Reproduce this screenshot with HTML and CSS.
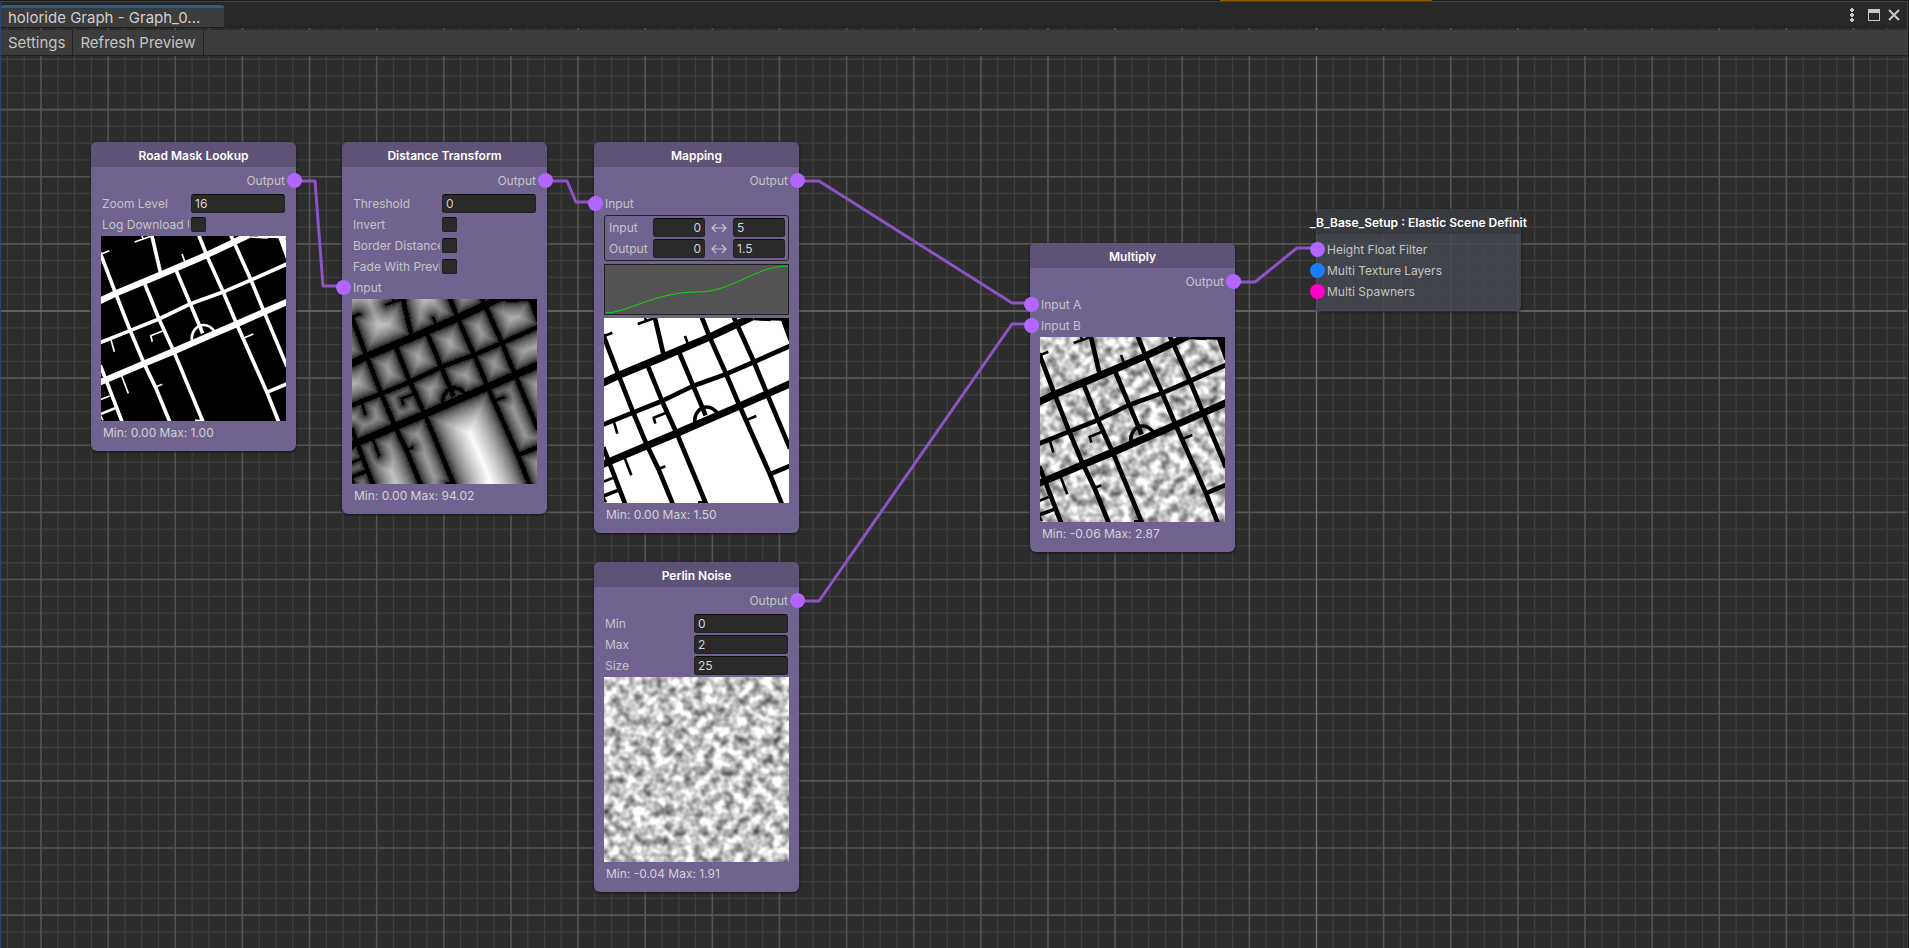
FILE: index.html
```html
<!DOCTYPE html>
<html lang="en">
<head>
<meta charset="utf-8">
<title>holoride Graph</title>
<link rel="stylesheet" href="styles.css">
<script src="graph.js" defer></script>
</head>
<body>
<svg class="defs" aria-hidden="true">
  <defs>
    <filter id="noise" x="0" y="0" width="100%" height="100%" color-interpolation-filters="sRGB">
      <feTurbulence type="fractalNoise" baseFrequency="0.1" numOctaves="2" seed="7"/>
      <feColorMatrix values="1.25 0 0 0 0.15  1.25 0 0 0 0.15  1.25 0 0 0 0.15  0 0 0 0 1"/>
      <feGaussianBlur stdDeviation="0.5"/>
    </filter>
    <symbol id="roads" viewBox="0 0 555 555">
      <g id="road-lines" fill="none" stroke="currentColor" stroke-linejoin="round">
        <path class="avenue" d="M-8 197L44 172L177 117L317 57L402 17L446 -4"/>
        <path class="street" d="M-6 321L87 284L174 249L267 204L364 169L450 132L562 82"/>
        <path class="avenue" d="M-8 441L129 383L220 345L307 307L407 264L489 228L562 196"/>
        <path class="street" d="M-3 49L44 172L87 282L129 382L165 457L208 562"/>
        <path class="street" d="M132 145L174 249L220 350L308 562"/>
        <path class="street" d="M225 102L267 202L305 292"/>
        <path class="street" d="M291 -8L319 62L367 169L407 264L497 467L535 562"/>
        <path class="street" d="M387 -8L450 132L489 227L558 392"/>
        <path class="street" d="M151 -8L179 112"/>
        <path class="street" d="M-2 388L19 442L65 562"/>
        <path class="street" d="M497 469L562 442"/>
        <path class="lane" d="M-4 56L25 44M101 18L152 0M123 0L127 10M243 54L252 78M185 285L149 299L154 317M30 312L40 347M62 420L82 472M163 453L184 445M430 305L457 294M-4 492L26 480M-2 538L6 553"/>
        <path class="ring" d="M-4 535L42 517"/>
        <path class="ring" d="M273 318C268 285 290 267 308 267C322 267 333 275 342 288"/>
        <path class="lane" d="M282 553L300 553M450 3L500 6M500 2L560 6"/>
        <path class="street" d="M470 0L560 0"/>
        <path class="avenue" d="M540 0L564 66"/>
      </g>
    </symbol>
    <symbol id="swap" viewBox="0 0 16 12">
      <path fill="none" stroke="currentColor" stroke-width="1.2" d="M1 6H15M5 2L1 6L5 10M11 2L15 6L11 10"/>
    </symbol>
  </defs>
</svg>

<div class="window">
  <header class="tabbar">
    <button class="tab" type="button">holoride Graph - Graph_0...</button>
    <div class="window-actions">
      <button class="icon-button menu" type="button" aria-label="Menu"><svg width="4" height="14" viewBox="0 0 4 14"><path fill="currentColor" d="M0 1h4v2H0zM1 0h2v4H1zM0 6h4v2H0zM1 5h2v4H1zM0 11h4v2H0zM1 10h2v4H1z"/></svg></button>
      <button class="icon-button" type="button" aria-label="Maximize"><svg width="12" height="12" viewBox="0 0 12 12"><path fill="currentColor" fill-rule="evenodd" d="M0 0h12v12H0zM1 4v7h10V4z"/></svg></button>
      <button class="icon-button" type="button" aria-label="Close"><svg width="12" height="12" viewBox="0 0 12 12"><path fill="none" stroke="currentColor" stroke-width="2" d="M1 1L11 11M11 1L1 11"/></svg></button>
    </div>
  </header>
  <nav class="toolbar">
    <button class="tool" type="button">Settings</button>
    <button class="tool" type="button">Refresh Preview</button>
  </nav>

  <main class="canvas">
    <svg class="layer" id="grid" aria-hidden="true"></svg>
    <svg class="layer edges" aria-hidden="true">
      <path d="M293 153H314L322 258H343"/>
      <path d="M545 153H566L575 174H594"/>
      <path d="M797 153H818L1011 275H1031"/>
      <path d="M797 573H818L1011 296H1031"/>
      <path d="M1233 254H1254L1296 220H1316"/>
    </svg>

    <section class="node road-mask">
      <h2 class="title">Road Mask Lookup</h2>
      <div class="row out">Output<span class="port"></span></div>
      <div class="row"><label for="zoom">Zoom Level</label><input class="field" id="zoom" type="text" value="16"></div>
      <div class="row"><label for="log">Log Download URL</label><input class="check" id="log" type="checkbox"></div>
      <svg class="preview on-black"><use href="#roads"/></svg>
      <p class="range">Min: 0.00 Max: 1.00</p>
    </section>

    <section class="node distance">
      <h2 class="title">Distance Transform</h2>
      <div class="row out">Output<span class="port"></span></div>
      <div class="row"><label for="threshold">Threshold</label><input class="field" id="threshold" type="text" value="0"></div>
      <div class="row"><label for="invert">Invert</label><input class="check" id="invert" type="checkbox"></div>
      <div class="row"><label for="border">Border Distance</label><input class="check" id="border" type="checkbox"></div>
      <div class="row"><label for="fade">Fade With Previous</label><input class="check" id="fade" type="checkbox"></div>
      <div class="row in"><span class="port"></span>Input</div>
      <canvas class="preview" id="distance-map" width="185" height="185"></canvas>
      <p class="range">Min: 0.00 Max: 94.02</p>
    </section>

    <section class="node mapping">
      <h2 class="title">Mapping</h2>
      <div class="row out">Output<span class="port"></span></div>
      <div class="row in"><span class="port"></span>Input</div>
      <div class="remap">
        <div class="remap-row"><label for="in-min">Input</label><input class="field low" id="in-min" type="text" value="0"><svg class="swap"><use href="#swap"/></svg><input class="field" type="text" value="5" aria-label="Input maximum"></div>
        <div class="remap-row"><label for="out-min">Output</label><input class="field low" id="out-min" type="text" value="0"><svg class="swap"><use href="#swap"/></svg><input class="field" type="text" value="1.5" aria-label="Output maximum"></div>
      </div>
      <svg class="curve" viewBox="0 0 183 49"><path fill="none" stroke="#12d812" d="M0 48C22 48 50 27 92 27C128 27 150 1 183 1"/></svg>
      <svg class="preview on-white"><use href="#roads"/></svg>
      <p class="range">Min: 0.00 Max: 1.50</p>
    </section>

    <section class="node perlin">
      <h2 class="title">Perlin Noise</h2>
      <div class="row out">Output<span class="port"></span></div>
      <div class="row"><label for="min">Min</label><input class="field" id="min" type="text" value="0"></div>
      <div class="row"><label for="max">Max</label><input class="field" id="max" type="text" value="2"></div>
      <div class="row"><label for="size">Size</label><input class="field" id="size" type="text" value="25"></div>
      <svg class="preview"><rect width="100%" height="100%" filter="url(#noise)"/></svg>
      <p class="range">Min: -0.04 Max: 1.91</p>
    </section>

    <section class="node multiply">
      <h2 class="title">Multiply</h2>
      <div class="row out">Output<span class="port"></span></div>
      <div class="row in"><span class="port"></span>Input A</div>
      <div class="row in"><span class="port"></span>Input B</div>
      <svg class="preview on-white"><rect width="100%" height="100%" filter="url(#noise)"/><use href="#roads"/></svg>
      <p class="range">Min: -0.06 Max: 2.87</p>
    </section>

    <section class="node scene">
      <h2 class="title">_B_Base_Setup : Elastic Scene Definit</h2>
      <div class="row in"><span class="port"></span>Height Float Filter</div>
      <div class="row in"><span class="port texture"></span>Multi Texture Layers</div>
      <div class="row in"><span class="port spawner"></span>Multi Spawners</div>
    </section>
  </main>
</div>
<div class="background-tab"></div>
</body>
</html>
```
FILE: styles.css
```css
* {
  box-sizing: border-box;
}

body {
  margin: 0;
  height: 100vh;
  padding: 1px 1px 0 0;
  background: #191919;
  color: #c4c4c4;
  font-family: Inter, "Liberation Sans", sans-serif;
  font-size: 12px;
  overflow: hidden;
}

button,
input {
  margin: 0;
  border: 0;
  font: inherit;
  color: inherit;
}

.defs {
  position: absolute;
  width: 0;
  height: 0;
}

.background-tab {
  position: absolute;
  top: 0;
  left: 1220px;
  width: 212px;
  height: 1px;
  background: #8a6000;
}

.window {
  position: relative;
  display: flex;
  flex-direction: column;
  height: 100%;
  border: 1px solid #2c4670;
  border-bottom: 0;
  background: #2d2d2d;
}

.tabbar {
  display: flex;
  justify-content: space-between;
  height: 26px;
  padding-top: 3px;
  background: #282828;
  border-bottom: 1px solid #202020;
}

.tab {
  width: 223px;
  padding: 0 7px;
  background: #3c3c3c;
  border-top: 3px solid #2c5d87;
  border-radius: 2px 2px 0 0;
  text-align: left;
  font-size: 15px;
  line-height: 19px;
  color: #d0d0d0;
}

.window-actions {
  display: flex;
  align-items: center;
  gap: 8px;
  padding: 0 7px 2px 0;
}

.icon-button {
  display: flex;
  padding: 0;
  background: none;
  color: #c8c8c8;
}

.menu {
  margin-right: 6px;
}

.toolbar {
  position: relative;
  z-index: 1;
  display: flex;
  height: 26px;
  margin-top: 2px;
  background: #3c3c3c;
  border-bottom: 1px solid #202020;
}

.tool {
  padding: 0 7px;
  background: none;
  border-right: 1px solid #232323;
  font-size: 15px;
  line-height: 25px;
}

.canvas {
  position: relative;
  flex: 1;
  margin-top: -28px;
}

.layer {
  position: absolute;
  inset: 0;
  width: 100%;
  height: 100%;
}

.edges {
  fill: none;
  stroke: #8c54c2;
  stroke-width: 3;
  stroke-linejoin: round;
  pointer-events: none;
}

.node {
  position: absolute;
  width: 205px;
  padding-bottom: 7px;
  background: #70638f;
  border-radius: 6px;
  box-shadow: 0 1px 3px #141414;
}

.road-mask { left: 90px; top: 114px; }
.distance { left: 341px; top: 114px; }
.mapping { left: 593px; top: 114px; }
.perlin { left: 593px; top: 534px; }
.multiply { left: 1029px; top: 215px; }

.title {
  display: flex;
  justify-content: center;
  height: 25px;
  margin: 0;
  background: #5e5277;
  border-bottom: 1px solid #5a4f72;
  border-radius: 6px 6px 0 0;
  font-size: 12px;
  font-weight: 600;
  line-height: 28px;
  color: #fff;
  white-space: nowrap;
}

.row {
  position: relative;
  display: flex;
  align-items: center;
  justify-content: space-between;
  height: 21px;
  padding: 0 11px;
}

.row label {
  width: 87px;
  overflow: hidden;
  white-space: nowrap;
}

.row.out {
  justify-content: flex-end;
  height: 26px;
}

.row.in {
  justify-content: flex-start;
}

.port {
  position: absolute;
  width: 15px;
  height: 15px;
  border-radius: 50%;
  background: #b266ff;
}

.out .port { right: -6px; }
.in .port { left: -6px; }
.port.texture { background: #1a7dff; }
.port.spawner { background: #ff00c8; }

.field {
  width: 94px;
  height: 19px;
  padding: 0 3px;
  background: #2a2a2a;
  border: 1px solid #212121;
  border-top-color: #0d0d0d;
  border-radius: 3px;
  color: #d2d2d2;
}

.check {
  appearance: none;
  width: 15px;
  height: 15px;
  margin-right: 79px;
  background: #2a2a2a;
  border: 1px solid #212121;
  border-top-color: #0d0d0d;
  border-radius: 2px;
}

.preview {
  display: block;
  width: 185px;
  height: 185px;
  margin: 1px 10px 0;
}

.on-black { background: #000; color: #fff; }
.on-white { --grow: 3px; background: #fff; color: #000; }

.avenue { stroke-width: calc(19px + var(--grow, 0px)); }
.street { stroke-width: calc(11px + var(--grow, 0px)); }
.ring { stroke-width: calc(8px + var(--grow, 0px)); }
.lane { stroke-width: calc(5px + var(--grow, 0px)); }

.range {
  margin: 0;
  padding-left: 12px;
  line-height: 23px;
  color: #d2d2d2;
}

.remap {
  display: grid;
  gap: 2px;
  margin: 1px 10px 0;
  padding: 2px 3px;
  border: 1px solid #242424;
  border-radius: 3px;
}

.remap-row {
  display: grid;
  grid-template-columns: 45px 52px 28px 52px;
  align-items: center;
}

.remap label {
  padding-left: 1px;
}

.remap .field {
  width: 52px;
}

.low {
  text-align: right;
}

.swap {
  width: 16px;
  height: 12px;
  justify-self: center;
}

.curve {
  display: block;
  width: 185px;
  height: 51px;
  margin: 3px 10px;
  background: #545454;
  border: 1px solid #1e1e1e;
}

.curve + .preview {
  margin-top: 0;
}

.scene {
  left: 1315px;
  top: 181px;
  height: 102px;
  background: #454a51d0;
  border-radius: 5px;
}

.scene .title {
  margin-bottom: 5px;
  background: #373a3e;
  border-color: #34373a;
}
```
FILE: graph.js
```js
const SVG_NS = "http://www.w3.org/2000/svg";

// Background grid: four minor cells to each major one, axes through the origin.
function drawGrid() {
  const svg = document.getElementById("grid");
  const { width, height } = svg.getBoundingClientRect();
  const step = 67.13 / 4;
  const origin = { x: 1315.5, y: 283 };
  const layers = { minor: "", major: "", axis: "" };
  const kind = i => (i === 0 ? "axis" : i % 4 === 0 ? "major" : "minor");

  for (let i = -Math.floor(origin.x / step); origin.x + i * step < width; i++) {
    layers[kind(i)] += `M${origin.x + i * step} 0V${height}`;
  }
  for (let i = -Math.floor(origin.y / step); origin.y + i * step < height; i++) {
    layers[kind(i)] += `M0 ${origin.y + i * step}H${width}`;
  }
  const styles = { minor: ["#404040", 1.3], major: ["#555555", 1.6], axis: ["#707070", 1.4] };
  for (const name of Object.keys(layers)) {
    const path = document.createElementNS(SVG_NS, "path");
    path.setAttribute("d", layers[name]);
    path.setAttribute("stroke", styles[name][0]);
    path.setAttribute("stroke-width", styles[name][1]);
    svg.append(path);
  }
}

// Distance from each pixel to the nearest road, as a grey map.
function drawDistanceMap() {
  const canvas = document.getElementById("distance-map");
  const ctx = canvas.getContext("2d");
  const n = canvas.width;
  ctx.scale(n / 555, n / 555);
  for (const road of document.querySelectorAll("#road-lines path")) {
    ctx.lineWidth = parseFloat(getComputedStyle(road).strokeWidth) + 2;
    ctx.stroke(new Path2D(road.getAttribute("d")));
  }
  const image = ctx.getImageData(0, 0, n, n);
  const px = image.data;
  const rows = new Float32Array(n * n).fill(1000);
  for (let y = 0; y < n; y++) {
    for (let x = 0, d = 1000; x < n; x++, d++) {
      if (px[(y * n + x) * 4 + 3] > 127) d = 0;
      rows[y * n + x] = d;
    }
    for (let x = n - 1, d = 1000; x >= 0; x--, d++) {
      if (rows[y * n + x] === 0) d = 0;
      rows[y * n + x] = Math.min(d, rows[y * n + x]);
    }
  }
  const dist = new Float32Array(n * n);
  let max = 0;
  for (let y = 0; y < n; y++) {
    for (let x = 0; x < n; x++) {
      let best = 1e9;
      for (let k = 0; k < n; k++) {
        const r = rows[k * n + x];
        best = Math.min(best, r * r + (k - y) * (k - y));
      }
      dist[y * n + x] = Math.sqrt(best);
      max = Math.max(max, dist[y * n + x]);
    }
  }
  for (let i = 0; i < n * n; i++) {
    const v = 255 * Math.pow(dist[i] / max, 0.52);
    px[i * 4] = px[i * 4 + 1] = px[i * 4 + 2] = v;
    px[i * 4 + 3] = 255;
  }
  ctx.putImageData(image, 0, 0);
}

drawGrid();
drawDistanceMap();
window.addEventListener("resize", () => {
  document.getElementById("grid").replaceChildren();
  drawGrid();
});
```
